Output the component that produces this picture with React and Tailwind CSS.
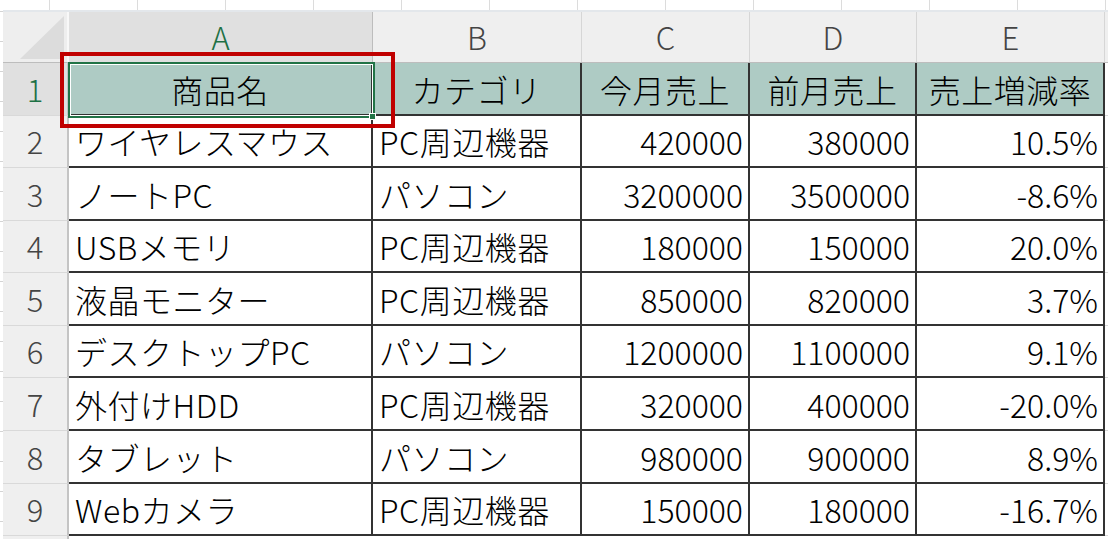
const rows = [
  ['ワイヤレスマウス', 'PC周辺機器', '420000', '380000', '10.5%'],
  ['ノートPC', 'パソコン', '3200000', '3500000', '-8.6%'],
  ['USBメモリ', 'PC周辺機器', '180000', '150000', '20.0%'],
  ['液晶モニター', 'PC周辺機器', '850000', '820000', '3.7%'],
  ['デスクトップPC', 'パソコン', '1200000', '1100000', '9.1%'],
  ['外付けHDD', 'PC周辺機器', '320000', '400000', '-20.0%'],
  ['タブレット', 'パソコン', '980000', '900000', '8.9%'],
  ['Webカメラ', 'PC周辺機器', '150000', '180000', '-16.7%'],
]

const heights = ['h-[52px]', 'h-[53px]', 'h-[52px]', 'h-[53px]', 'h-[52px]', 'h-[53px]', 'h-[53px]', 'h-[52px]']
const colW = ['w-[304px]', 'w-[209px]', 'w-[168px]', 'w-[167px]', 'w-[188px]']
const headers = ['商品名', 'カテゴリ', '今月売上', '前月売上', '売上増減率']
const letters = ['A', 'B', 'C', 'D', 'E']
const font = { fontFamily: '"Noto Sans CJK JP", "Noto Sans", sans-serif' }

function RowHeader({ n, active, h }) {
  return (
    <div
      className={`${h} w-[66px] shrink-0 flex items-center justify-center border-r-2 border-b border-r-[#c4c4c4] border-b-[#d9d9d9] text-[31px] font-light ${
        active ? 'bg-[#e0e0e0] text-[#1e7145]' : 'bg-[#efefef] text-[#444]'
      }`}
    >
      {n}
    </div>
  )
}

export default function App() {
  return (
    <div className="relative w-[1108px] h-[539px] overflow-hidden bg-white flex" style={font}>
      {/* left gutter from the sheet behind */}
      <div className="w-[3px] shrink-0 flex flex-col">
        <div className="h-[12px] shrink-0 border-b border-[#d4d4d4]" />
        {Array.from({ length: 18 }).map((_, i) => (
          <div key={i} className="h-[30px] shrink-0 border-b border-[#d4d4d4]" />
        ))}
      </div>

      <div className="flex-1 flex flex-col">
        {/* top strip */}
        <div className="h-[10px] shrink-0 flex">
          <div className="w-[47px] shrink-0 border-r border-[#dcdcdc]" />
          {Array.from({ length: 12 }).map((_, i) => (
            <div key={i} className="w-[88px] shrink-0 border-r border-[#dcdcdc]" />
          ))}
        </div>
        <div className="h-[2px] shrink-0 bg-[#e3e7eb]" />

        {/* column headers */}
        <div className="h-[51px] shrink-0 flex border-b border-[#bdbdbd]">
          <div className="w-[66px] shrink-0 bg-[#eeeeee] border-r-2 border-[#f8f8f8] flex items-end justify-end pr-[3px] pb-[3px]">
            <svg width="44" height="43" viewBox="0 0 44 43">
              <polygon points="44,0 44,43 0,43" fill="#dcdcdc" />
            </svg>
          </div>
          {letters.map((l, i) => (
            <div
              key={l}
              className={`${colW[i]} shrink-0 flex items-center justify-center text-[31px] font-light border-r ${
                i === 0 ? 'bg-[#e0e0e0] text-[#1e7145] border-[#bdbdbd]' : 'bg-[#efefef] text-[#444] border-[#d6d6d6]'
              }`}
            >
              {l}
            </div>
          ))}
          <div className="flex-1 bg-[#efefef]" />
        </div>

        {/* row 1: table header */}
        <div className="flex shrink-0">
          <RowHeader n={1} active h="h-[53px]" />
          {headers.map((t, i) => (
            <div
              key={t}
              className={`${colW[i]} h-[53px] shrink-0 flex items-center justify-center bg-[#aecbc4] text-black text-[32px] font-light tracking-[0.5px] border-r-2 border-b-2 border-[#333]`}
            >
              {t}
            </div>
          ))}
          <div className="flex-1 border-b border-[#d9d9d9]" />
        </div>

        {/* data rows */}
        {rows.map((r, ri) => (
          <div key={ri} className="flex shrink-0">
            <RowHeader n={ri + 2} h={heights[ri]} />
            {r.map((v, ci) => (
              <div
                key={ci}
                className={`${colW[ci]} ${heights[ri]} shrink-0 flex items-center text-black text-[32px] font-light whitespace-nowrap border-r-2 border-b-2 border-[#333] ${
                  ci < 2 ? 'justify-start pl-[6px] tracking-[0.5px]' : 'justify-end pr-[5px]'
                }`}
              >
                {v}
              </div>
            ))}
            <div className="flex-1 border-b border-[#d9d9d9]" />
          </div>
        ))}

        <div className="flex flex-1">
          <div className="w-[66px] shrink-0 bg-[#efefef] border-r-2 border-[#c4c4c4]" />
          <div className="flex-1" />
        </div>
      </div>

      {/* active cell selection */}
      <div className="absolute left-[68px] top-[62px] w-[307px] h-[56px] border-2 border-[#217346]">
        <div className="w-full h-full border border-white" />
      </div>
      <div className="absolute left-[369px] top-[113px] w-[7px] h-[7px] bg-[#217346] border border-white" />

      {/* red annotation box */}
      <div className="absolute left-[60px] top-[52px] w-[335px] h-[76px] border-[4px] border-[#c00000]" />
    </div>
  )
}
